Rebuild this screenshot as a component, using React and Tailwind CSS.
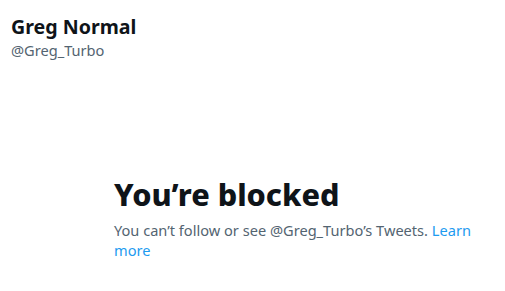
export default function App() {
  return (
    <div className="w-[505px] h-[291px] bg-white overflow-hidden">
      <div className="font-['Noto_Sans',sans-serif]">
        <div className="pl-[11px] pt-[15px]">
          <div className="text-[19.6px] leading-[24px] font-bold text-[#0f1419]">Greg Normal</div>
          <div className="text-[14.6px] leading-[20px] text-[#536471] mt-[1px]">@Greg_Turbo</div>
        </div>
        <div className="pl-[114px] pt-[116px]">
          <div className="text-[30.6px] leading-[36px] font-extrabold text-[#0f1419]">You’re blocked</div>
          <div className="w-[362px] text-[14.6px] leading-[20px] text-[#536471] mt-[8px]">
            You can’t follow or see @Greg_Turbo’s Tweets.{" "}
            <span className="text-[#1d9bf0]">Learn</span>{" "}
            <span className="text-[#1d9bf0]">more</span>
          </div>
        </div>
      </div>
    </div>
  );
}
